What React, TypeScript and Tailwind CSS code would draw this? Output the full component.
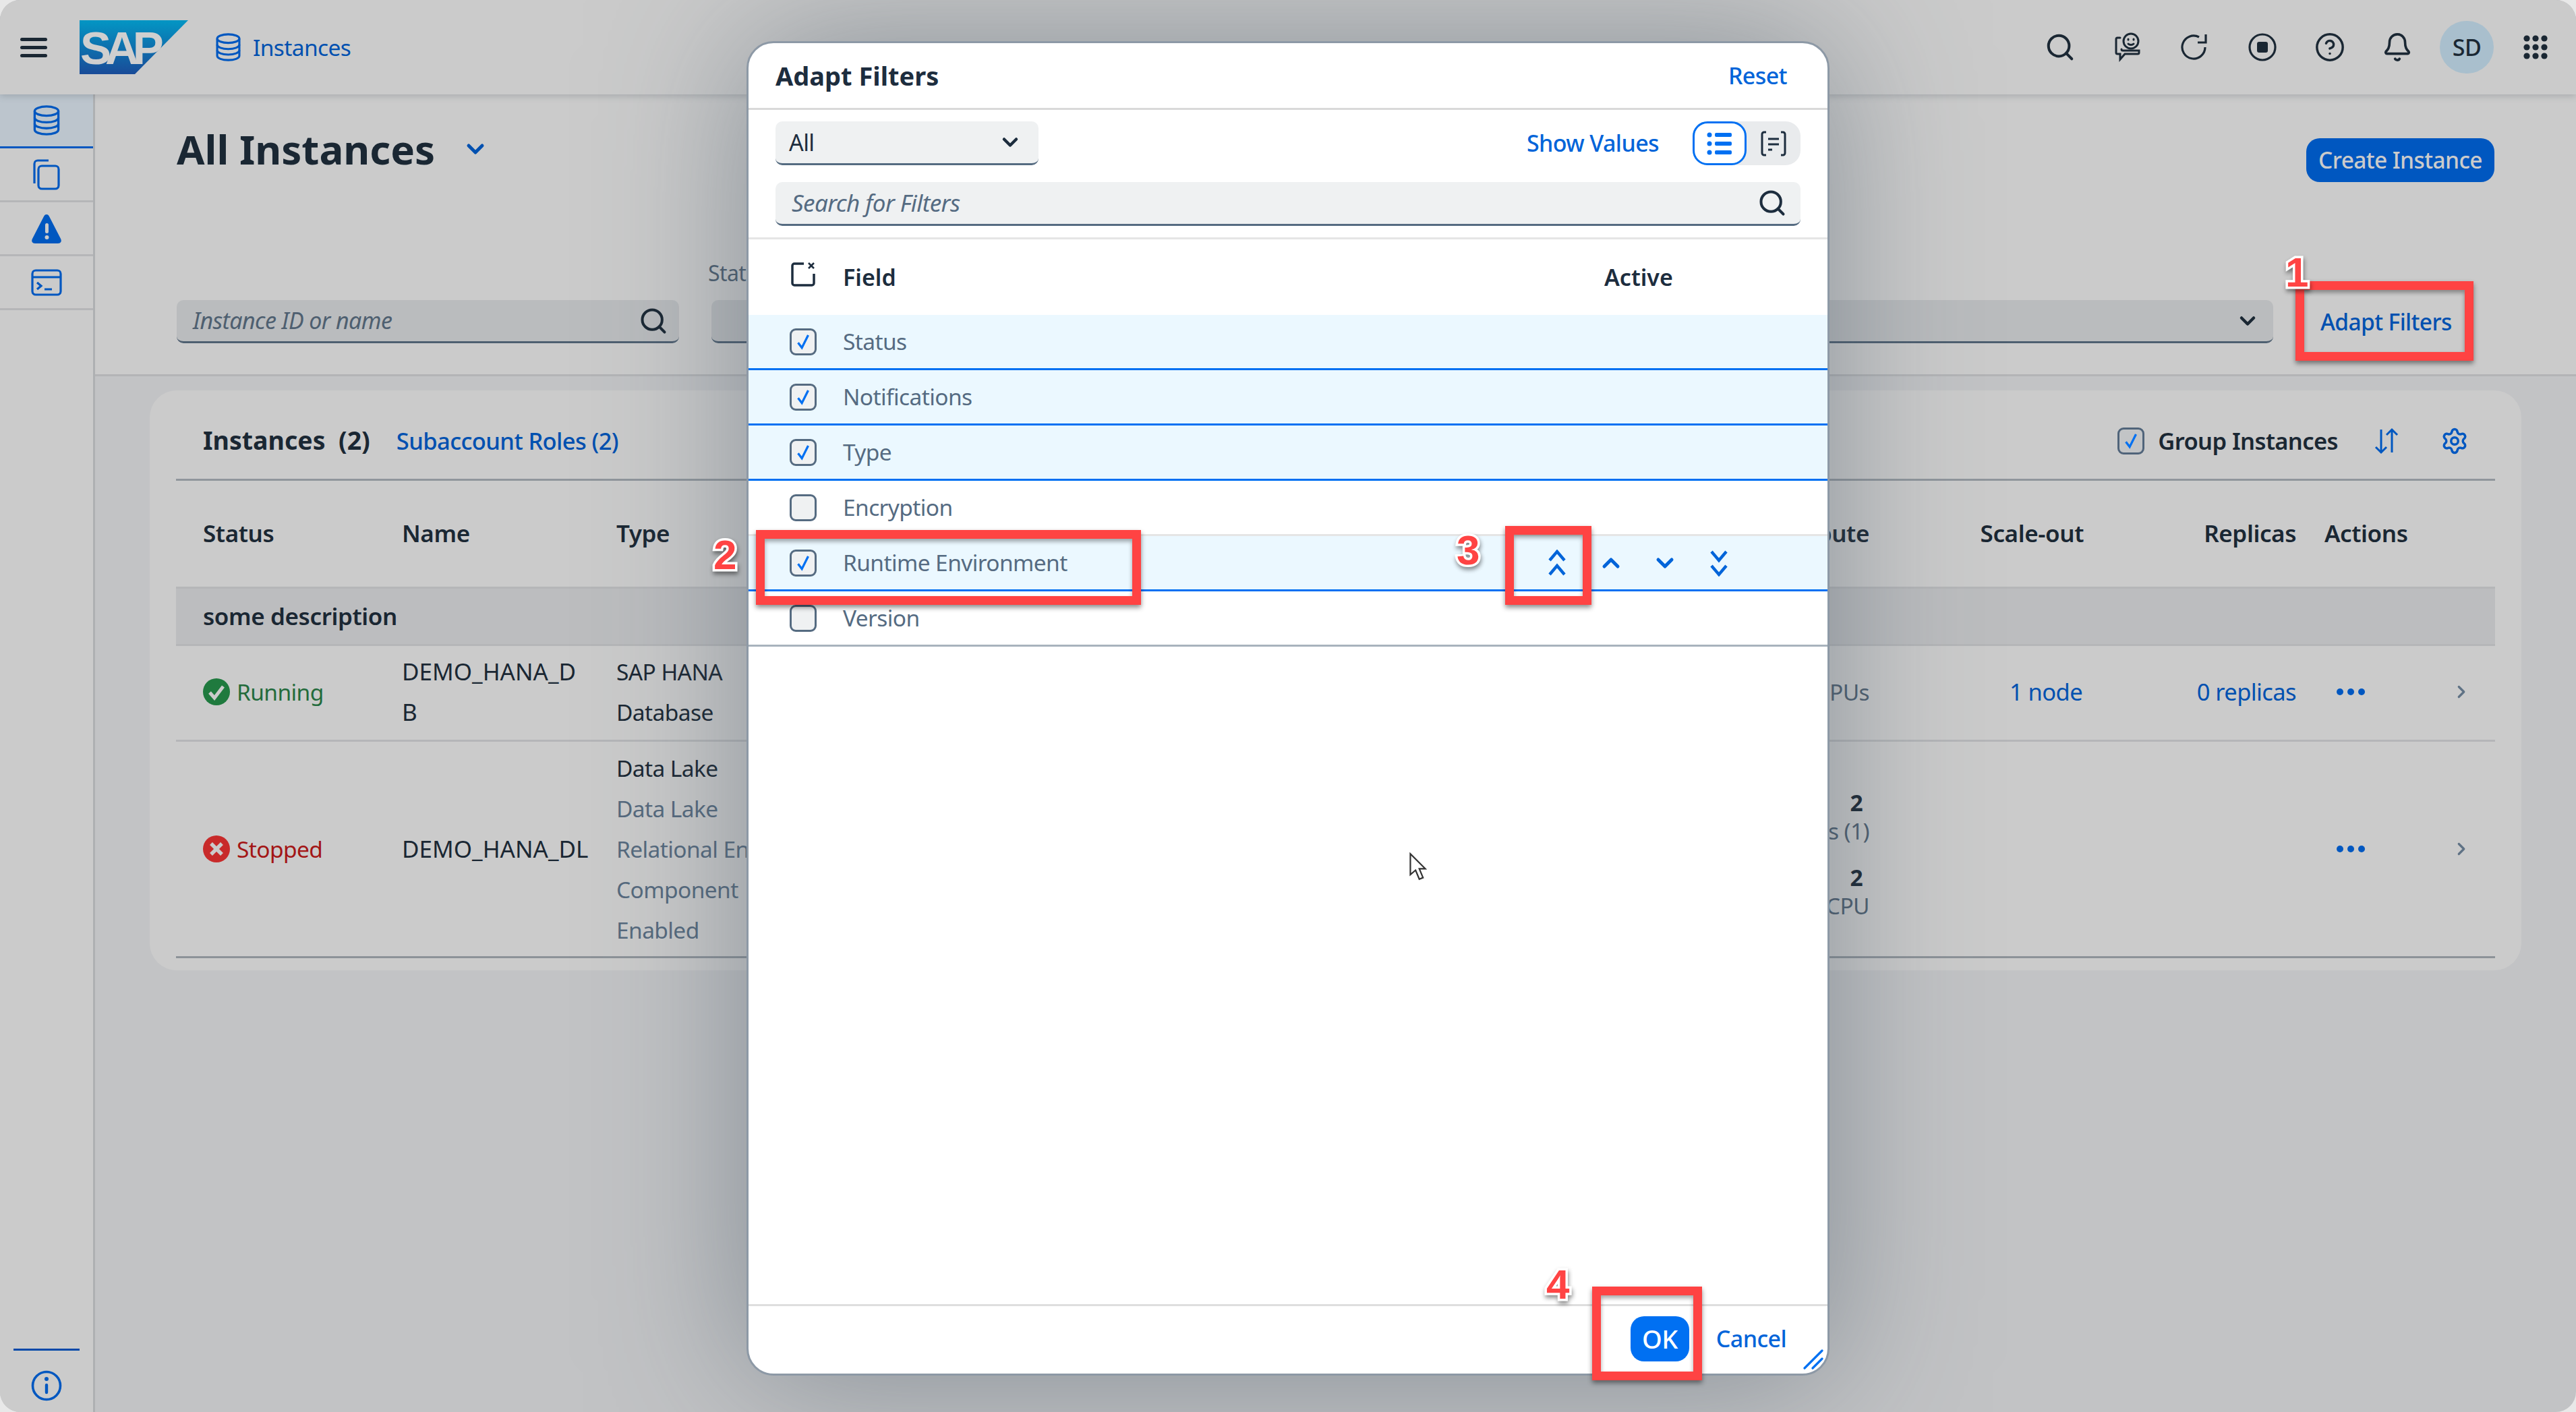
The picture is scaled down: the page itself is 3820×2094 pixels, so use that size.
import React from "react";
import { Bell, ChevronDown, ChevronRight, ChevronUp, CircleHelp, Search, Settings } from "lucide-react";

const Db = ({ className }: { className: string }) => (
  <svg viewBox="0 0 40 46" fill="none" stroke="currentColor" strokeWidth="3.4" className={className}>
    <ellipse cx="20" cy="9" rx="18" ry="7" />
    <path d="M2 9v28c0 4 8 7 18 7s18-3 18-7V9" />
    <path d="M2 19c0 4 8 7 18 7s18-3 18-7M2 28c0 4 8 7 18 7s18-3 18-7" />
  </svg>
);

const Check = () => (
  <svg viewBox="0 0 24 24" fill="none" stroke="#0070f2" strokeWidth="2.6" className="h-[30px] w-[30px]">
    <path d="M6 13l4.500 6L18 4" />
  </svg>
);

function Checkbox({ checked }: { checked: boolean }) {
  return (
    <div className="flex h-[40px] w-[40px] shrink-0 items-center justify-center rounded-[9px] border-[3px] border-[#556b81] bg-[#eff1f2]">
      {checked && <Check />}
    </div>
  );
}

// double chevrons of the move buttons
const DoubleChevron = ({ up }: { up?: boolean }) => (
  <svg viewBox="0 0 30 40" fill="none" stroke="#0064d9" strokeWidth="4.4" className={`h-[40px] w-[30px] ${up ? "" : "rotate-180"}`}>
    <path d="M4 16L15 3l11 13M4 37l11-13 11 13" />
  </svg>
);

function Marker({ box }: { box: string }) {
  return (
    <div className={`absolute border-[13px] border-[#ff4343] shadow-[0_4px_7px_rgba(0,0,0,0.45),inset_0_4px_6px_rgba(0,0,0,0.35)] ${box}`} />
  );
}

function Num({ pos, n }: { pos: string; n: string }) {
  return (
    <span className={`absolute font-['Liberation_Sans',sans-serif] text-[62px] leading-[62px] font-bold tracking-normal text-[#ff4343] [-webkit-text-stroke:7px_#ffffff] [paint-order:stroke_fill] [filter:drop-shadow(1px_4px_3px_rgba(0,0,0,0.45))] ${pos}`}>
      {n}
    </span>
  );
}

const filterRows = [
  { label: "Status", checked: true, line: "border-[#0070f2]" },
  { label: "Notifications", checked: true, line: "border-[#0070f2]" },
  { label: "Type", checked: true, line: "border-[#0070f2]" },
  { label: "Encryption", checked: false, line: "border-[#e5e5e5]" },
  { label: "Runtime Environment", checked: true, line: "border-[#0070f2]", moves: true },
  { label: "Version", checked: false, line: "border-[#a8b3bd]" },
];

function AdaptFilters() {
  return (
    <div className="absolute left-[1107px] top-[61px] z-10 flex h-[1979px] w-[1606px] flex-col overflow-hidden rounded-[40px] border-[3px] border-[#8d99a6] bg-white shadow-[0_0_220px_rgba(70,85,100,0.5)]">
      <div className="flex h-[99px] shrink-0 items-center justify-between border-b-[3px] border-[#d9d9d9] pl-[40px] pr-[60px]">
        <span className="text-[38px] font-bold tracking-normal text-[#1d2d3e]">Adapt Filters</span>
        <span className="text-[34px] font-medium text-[#0064d9]">Reset</span>
      </div>

      <div className="flex shrink-0 flex-col gap-[25px] border-b-[3px] border-[#e5e5e5] px-[40px] pb-[17px] pt-[17px]">
        <div className="flex h-[65px] items-center">
          <div className="flex h-full w-[390px] items-center justify-between rounded-[10px] border-b-[3px] border-[#556b81] bg-[#eff1f2] pl-[20px] pr-[24px] text-[34px] text-[#1d2d3e]">
            All
            <ChevronDown className="h-[36px] w-[36px]" strokeWidth={3} />
          </div>
          <span className="ml-auto mr-[50px] text-[34px] font-medium text-[#0064d9]">Show Values</span>
          <div className="flex h-full w-[160px] rounded-[22px] bg-[#e9ebed]">
            <div className="flex w-[80px] items-center justify-center rounded-[22px] border-[3px] border-[#0070f2] bg-white">
              <svg viewBox="0 0 40 40" fill="#0070f2" className="h-[40px] w-[40px]">
                <circle cx="5" cy="7" r="3.5" /><circle cx="5" cy="20" r="3.5" /><circle cx="5" cy="33" r="3.5" />
                <rect x="13" y="4" width="25" height="6" rx="2" /><rect x="13" y="17" width="25" height="6" rx="2" /><rect x="13" y="30" width="25" height="6" rx="2" />
              </svg>
            </div>
            <div className="flex flex-1 items-center justify-center">
              <svg viewBox="0 0 40 40" fill="none" stroke="#1d2d3e" strokeWidth="3" className="h-[40px] w-[40px]">
                <path d="M9 3H6a3 3 0 0 0-3 3v28a3 3 0 0 0 3 3h3M31 3h3a3 3 0 0 1 3 3v28a3 3 0 0 1-3 3h-3M12 13h16M12 21h16M12 29h6" />
              </svg>
            </div>
          </div>
        </div>
        <div className="flex h-[65px] items-center justify-between rounded-[10px] border-b-[3px] border-[#556b81] bg-[#eff1f2] pl-[24px] pr-[20px]">
          <span className="text-[35px] italic text-[#556b82]">Search for Filters</span>
          <Search className="h-[44px] w-[44px] text-[#1d2d3e]" strokeWidth={2.2} />
        </div>
      </div>

      <div className="flex h-[112px] shrink-0 items-center pl-[62px] text-[34px] font-semibold tracking-normal text-[#1d2d3e]">
        <svg viewBox="0 0 38 38" fill="none" stroke="#1d2d3e" strokeWidth="3.5" className="h-[38px] w-[38px] -translate-y-[4px]">
          <path d="M20 3H6a3 3 0 0 0-3 3v26a3 3 0 0 0 3 3h26a3 3 0 0 0 3-3V18" />
          <path d="M27 2l8 8M35 2l-8 8" strokeWidth="2.6" />
        </svg>
        <span className="ml-[40px] w-[1129px]">Field</span>
        <span>Active</span>
      </div>

      {filterRows.map((row) => (
        <div
          key={row.label}
          className={`flex h-[82px] shrink-0 items-center border-b-[3px] pl-[61px] text-[33.5px] text-[#556b82] ${row.line} ${row.checked ? "bg-[#ebf8ff]" : "bg-white"}`}
        >
          <Checkbox checked={row.checked} />
          <span className="ml-[39px]">{row.label}</span>
          {row.moves && (
            <div className="ml-auto mr-[146px] flex items-center gap-[50px] text-[#0064d9]">
              <DoubleChevron up />
              <ChevronUp className="-mx-[5px] h-[40px] w-[40px]" strokeWidth={3} />
              <ChevronDown className="-mx-[5px] h-[40px] w-[40px]" strokeWidth={3} />
              <DoubleChevron />
            </div>
          )}
        </div>
      ))}

      <div className="relative flex-1">
        <svg viewBox="0 0 12 19" fill="white" stroke="#333" strokeWidth="1" className="absolute left-[979px] top-[305px] h-[42px] w-[27px]">
          <path d="M1 1v14l3.500-3 2.500 6 2.500-1-2.500-6H11z" />
        </svg>
      </div>

      <div className="relative flex h-[103px] shrink-0 items-center justify-end gap-[40px] border-t-[3px] border-[#dedede] pb-[3px] pr-[61px] text-[34px] font-medium">
        <div className="flex h-[67px] w-[87px] items-center justify-center rounded-[20px] bg-[#0070f2] text-[38px] text-white">OK</div>
        <span className="text-[#0064d9]">Cancel</span>
        <svg viewBox="0 0 30 30" stroke="#0070f2" strokeWidth="3.2" strokeLinecap="round" className="absolute bottom-[6px] right-[6px] h-[30px] w-[30px]">
          <path d="M2 28L28 2M14 28l14-14" />
        </svg>
      </div>
    </div>
  );
}

function TopBar() {
  return (
    <header className="relative z-[1] flex h-[140px] shrink-0 items-center bg-[#cbcbcb] shadow-[0_2px_10px_rgba(80,90,100,0.3)]">
      <div className="ml-[30px] flex w-[40px] flex-col gap-[7px]">
        <div className="h-[5px] rounded bg-[#1a2733]" />
        <div className="h-[5px] rounded bg-[#1a2733]" />
        <div className="h-[5px] rounded bg-[#1a2733]" />
      </div>
      <svg viewBox="0 0 161 80" className="ml-[48px] h-[80px] w-[161px]">
        <defs>
          <linearGradient id="sapBlue" x1="0" y1="0" x2="0" y2="1">
            <stop offset="0" stopColor="#0396c4" />
            <stop offset="1" stopColor="#194b98" />
          </linearGradient>
        </defs>
        <polygon points="0,0 161,0 82,80 0,80" fill="url(#sapBlue)" />
        <text x="1" y="65" fontFamily="Liberation Sans" fontWeight="700" fontSize="69" letterSpacing="-9" fill="#cfcfcf">SAP</text>
      </svg>
      <Db className="ml-[41px] h-[42px] w-[37px] text-[#0057c0]" />
      <span className="ml-[18px] text-[33.5px] text-[#0050b0]">Instances</span>

      <div className="ml-auto flex items-center text-[#1a2733]">
        <div className="flex w-[100px] justify-center"><Search className="h-[46px] w-[46px]" strokeWidth={2.1} /></div>
        <div className="flex w-[100px] justify-center">
          <svg viewBox="0 0 40 44" fill="none" stroke="currentColor" strokeWidth="3" strokeLinecap="round" className="h-[44px] w-[40px]">
            <circle cx="25" cy="13" r="11" />
            <path d="M21 17c2 2 6 2 8 0" />
            <path d="M21 10v1M29 10v1" />
            <path d="M9 8H5a2 2 0 0 0-2 2v20a2 2 0 0 0 2 2h4v8l7-8h19a2 2 0 0 0 2-2v-3H13a2 2 0 0 1-2-2" />
          </svg>
        </div>
        <div className="flex w-[100px] justify-center">
          <svg viewBox="0 0 44 44" fill="none" stroke="currentColor" strokeWidth="3.2" className="h-[44px] w-[44px]">
            <path d="M37 22a17 17 0 1 1-9-15" />
            <path d="M38 3v12H26" />
          </svg>
        </div>
        <div className="flex w-[100px] justify-center">
          <svg viewBox="0 0 44 44" className="h-[44px] w-[44px]">
            <circle cx="22" cy="22" r="19" fill="none" stroke="currentColor" strokeWidth="3.2" />
            <rect x="14" y="14" width="16" height="16" rx="3" fill="currentColor" />
          </svg>
        </div>
        <div className="flex w-[100px] justify-center"><CircleHelp className="h-[46px] w-[46px]" strokeWidth={1.8} /></div>
        <div className="flex w-[100px] justify-center"><Bell className="h-[46px] w-[46px]" strokeWidth={1.9} /></div>
        <div className="ml-[13px] flex h-[78px] w-[80px] items-center justify-center rounded-full bg-[#a9bfcd] text-[34px] font-medium">SD</div>
        <svg viewBox="0 0 36 36" fill="currentColor" className="ml-[44px] mr-[42px] h-[36px] w-[36px]">
          {[5, 18, 31].map((y) => [5, 18, 31].map((x) => <circle key={`${x}-${y}`} cx={x} cy={y} r="4.6" />))}
        </svg>
      </div>
    </header>
  );
}

function SideNav() {
  return (
    <nav className="flex w-[141px] shrink-0 flex-col border-r-[3px] border-[#aeb0b2] bg-[#cbcbcb] text-[#0057c0]">
      <div className="flex h-[80px] items-center justify-center border-b-[3px] border-[#0057c0] bg-[#bcc5cd]">
        <Db className="h-[45px] w-[40px]" />
      </div>
      <div className="flex h-[80px] items-center justify-center border-b-[3px] border-[#b5b6b8]">
        <svg viewBox="0 0 40 46" fill="none" stroke="currentColor" strokeWidth="3.2" className="h-[46px] w-[40px]">
          <rect x="8" y="10" width="30" height="34" rx="5" />
          <path d="M2 36V7a5 5 0 0 1 5-5h16" />
        </svg>
      </div>
      <div className="flex h-[80px] items-center justify-center border-b-[3px] border-[#b5b6b8]">
        <svg viewBox="0 0 46 44" className="h-[44px] w-[46px]">
          <path d="M23 1c2 0 3 1 4 3l17 33c2 4 0 7-4 7H6c-4 0-6-3-4-7L19 4c1-2 2-3 4-3z" fill="currentColor" />
          <rect x="21" y="14" width="5" height="15" rx="2.5" fill="#cbcbcb" />
          <circle cx="23.5" cy="35" r="3" fill="#cbcbcb" />
        </svg>
      </div>
      <div className="flex h-[80px] items-center justify-center border-b-[3px] border-[#b5b6b8]">
        <svg viewBox="0 0 46 40" fill="none" stroke="currentColor" strokeWidth="3.2" className="h-[40px] w-[46px]">
          <rect x="2" y="2" width="42" height="36" rx="5" />
          <path d="M2 12h42M9 20l6 5-6 5M20 30h11" />
        </svg>
      </div>
      <div className="mt-auto mx-[20px] mb-[29px] h-[3px] bg-[#0048a8]" />
      <div className="mb-[16px] flex justify-center">
        <svg viewBox="0 0 46 46" fill="none" stroke="currentColor" strokeWidth="3.6" className="h-[46px] w-[46px]">
          <circle cx="23" cy="23" r="20.5" />
          <path d="M23 22v11" strokeWidth="4.4" strokeLinecap="round" />
          <circle cx="23" cy="13" r="3" fill="currentColor" stroke="none" />
        </svg>
      </div>
    </nav>
  );
}

const columns = "grid grid-cols-[297px_316px_827px_1111px_318px_315px_255px]";

function RowActions() {
  return (
    <div className="flex items-center pl-[20px]">
      <svg viewBox="0 0 42 12" fill="#0057c0" className="h-[12px] w-[42px]">
        <circle cx="5" cy="6" r="5" /><circle cx="21" cy="6" r="5" /><circle cx="37" cy="6" r="5" />
      </svg>
      <ChevronRight className="ml-[128px] h-[30px] w-[30px] text-[#5f7285]" strokeWidth={2.6} />
    </div>
  );
}

function InstancesTable() {
  return (
    <div className="mx-[81px] mt-[21px] h-[860px] rounded-[40px] bg-[#cbcbcb] px-[39px]">
      <div className="flex h-[134px] items-center border-b-[3px] border-[#90969c] pl-[40px] pr-[39px] pt-[18px]">
        <span className="text-[37.5px] font-bold tracking-normal text-[#1a2733]">Instances&nbsp; (2)</span>
        <span className="ml-[39px] text-[34.5px] font-medium text-[#0050b0]">Subaccount Roles (2)</span>
        <div className="ml-auto flex items-center">
          <div className="flex h-[40px] w-[40px] items-center justify-center rounded-[9px] border-[3px] border-[#50647a] bg-[#c2c4c6]"><Check /></div>
          <span className="ml-[20px] text-[34.5px] font-semibold text-[#1a2733]">Group Instances</span>
          <svg viewBox="0 0 40 40" fill="none" stroke="#0057c0" strokeWidth="3" className="ml-[52px] h-[40px] w-[40px]">
            <path d="M12 3v34M4 29l8 8 8-8M28 37V3M20 11l8-8 8 8" />
          </svg>
          <Settings className="ml-[60px] h-[42px] w-[42px] text-[#0057c0]" strokeWidth={2} />
        </div>
      </div>

      <div className={`${columns} h-[160px] items-center border-b-[3px] border-[#b5b6b8] text-[35px] font-semibold tracking-[-0.4px] text-[#1a2733]`}>
        <span className="pl-[40px]">Status</span>
        <span className="pl-[38px]">Name</span>
        <span className="pl-[40px]">Type</span>
        <span className="pr-[40px] text-right">Compute</span>
        <span className="pr-[40px] text-right">Scale-out</span>
        <span className="pr-[40px] text-right">Replicas</span>
        <span className="pl-[2px]">Actions</span>
      </div>

      <div className="flex h-[85px] items-center border-b-[3px] border-[#b5b6b8] bg-[#bcbdbf] pl-[40px] text-[35px] font-semibold tracking-[-0.4px] text-[#1a2733]">
        some description
      </div>

      <div className={`${columns} h-[142px] items-center border-b-[3px] border-[#b5b6b8] pb-[4px] text-[33.5px] leading-[60px] text-[#1a2733]`}>
        <div className="flex items-center pl-[40px] text-[#236b3c]">
          <svg viewBox="0 0 40 40" className="h-[40px] w-[40px]">
            <circle cx="20" cy="20" r="20" fill="#1f7a3e" />
            <path d="M10 21l7 8 13-17" fill="none" stroke="#cbcbcb" strokeWidth="5" />
          </svg>
          <span className="ml-[10px]">Running</span>
        </div>
        <div className="pl-[38px] text-[35px] tracking-normal">DEMO_HANA_D<br />B</div>
        <div className="pl-[40px]">SAP HANA<br />Database</div>
        <div className="pr-[40px] text-right text-[#4e5f70]">8 vCPUs</div>
        <div className="pr-[42px] text-right text-[34.5px] text-[#0050b0]">1 node</div>
        <div className="pr-[40px] text-right text-[34.5px] text-[#0050b0]">0 replicas</div>
        <RowActions />
      </div>

      <div className={`${columns} h-[321px] items-center border-b-[3px] border-[#8c9298] text-[33.5px] leading-[60px] text-[#1a2733]`}>
        <div className="flex items-center pl-[40px] text-[#a31616]">
          <svg viewBox="0 0 40 40" className="h-[40px] w-[40px]">
            <circle cx="20" cy="20" r="20" fill="#c82a2a" />
            <path d="M12 12l16 16M28 12L12 28" fill="none" stroke="#cbcbcb" strokeWidth="5.5" />
          </svg>
          <span className="ml-[10px]">Stopped</span>
        </div>
        <div className="pl-[38px] text-[35px] tracking-normal">DEMO_HANA_DL</div>
        <div className="pl-[40px]">
          Data Lake
          <div className="text-[#566a7e]">Data Lake<br />Relational Engine<br />Component<br />Enabled</div>
        </div>
        <div className="pr-[40px] pt-[14px] text-right leading-[42px] text-[#4e5f70]">
          <div className="pr-[10px] font-bold text-[#1a2733]">2</div>
          <div>Nodes (1)</div>
          <div className="mt-[27px] pr-[10px] font-bold text-[#1a2733]">2</div>
          <div>vCPU</div>
        </div>
        <div />
        <div />
        <RowActions />
      </div>
    </div>
  );
}

export default function App() {
  return (
    <div className="relative h-[2094px] w-[3820px] overflow-hidden bg-[#e8e8e8] font-['Noto_Sans',sans-serif] tracking-[-0.6px]">
      <div className="flex h-full flex-col overflow-hidden rounded-[30px] bg-[#c2c3c5]">
        <TopBar />
        <div className="flex min-h-0 flex-1">
          <SideNav />
          <main className="min-w-0 flex-1">
            <section className="flex h-[418px] flex-col justify-between border-b-[3px] border-[#b3b4b6] bg-[#cbcbcb] pb-[46px] pl-[121px] pr-[121px] pt-[41px]">
              <div className="flex items-start justify-between">
                <div className="flex h-[80px] items-center text-[#1a2733]">
                  <h1 className="text-[60px] font-bold tracking-normal">All Instances</h1>
                  <ChevronDown className="ml-[40px] h-[40px] w-[40px] text-[#0050b0]" strokeWidth={3} />
                </div>
                <div className="mt-[24px] flex h-[65px] w-[279px] items-center justify-center rounded-[20px] bg-[#0057c0] text-[33.5px] font-medium text-[#cbcbcb]">Create Instance</div>
              </div>
              <div className="flex items-end gap-[48px]">
                <div className="flex h-[64px] w-[745px] items-center justify-between rounded-[10px] border-b-[3px] border-[#4e5f70] bg-[#babcbe] pl-[24px] pr-[16px]">
                  <span className="text-[34px] italic text-[#4e5f70]">Instance ID or name</span>
                  <Search className="h-[44px] w-[44px] text-[#1a2733]" strokeWidth={2.2} />
                </div>
                <div className="flex min-w-0 flex-1 flex-col gap-[18px]">
                  <span className="-ml-[5px] -mt-[2px] h-[46px] text-[32px] text-[#4e5f70]">Status</span>
                  <div className="flex h-[64px] items-center justify-end rounded-[10px] border-b-[3px] border-[#4e5f70] bg-[#babcbe] pr-[20px]">
                    <ChevronDown className="h-[36px] w-[36px] text-[#1a2733]" strokeWidth={3} />
                  </div>
                </div>
                <div className="ml-[22px] flex h-[64px] w-[258px] items-center text-[33.5px] font-medium text-[#0050b0]">Adapt Filters</div>
              </div>
            </section>
            <InstancesTable />
          </main>
        </div>
      </div>

      <AdaptFilters />

      <Marker box="left-[3404px] top-[417px] h-[118px] w-[264px]" />
      <Marker box="z-20 left-[1121px] top-[786px] h-[111px] w-[571px]" />
      <Marker box="z-20 left-[2232px] top-[780px] h-[117px] w-[128px]" />
      <Marker box="z-20 left-[2361px] top-[1908px] h-[139px] w-[163px]" />
      <Num pos="left-[3389px] top-[373px]" n="1" />
      <Num pos="z-20 left-[1058px] top-[792px]" n="2" />
      <Num pos="z-20 left-[2160px] top-[785px]" n="3" />
      <Num pos="z-20 left-[2293px] top-[1874px]" n="4" />
    </div>
  );
}
